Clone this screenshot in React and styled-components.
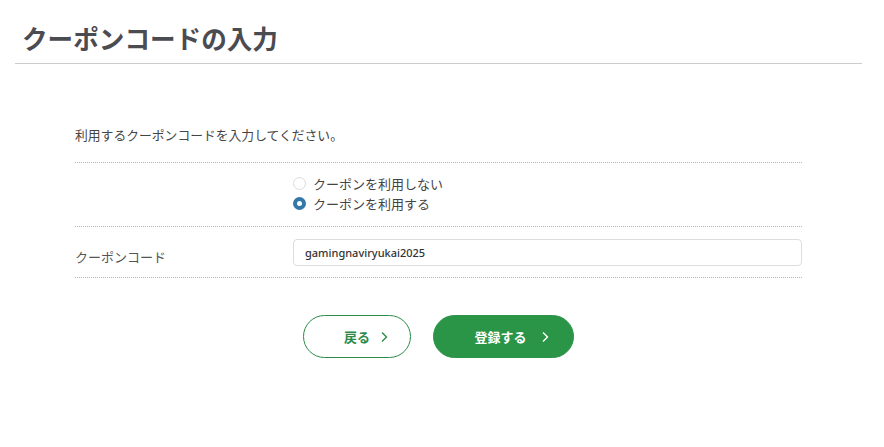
import React, { useState } from 'react';
import styled, { createGlobalStyle, css } from 'styled-components';

const GlobalStyle = createGlobalStyle`
  body {
    margin: 0;
    background: #fff;
    font-family: "Noto Sans CJK JP", "Noto Sans", sans-serif;
    color: #4d4d4d;
  }
`;

const Header = styled.header`
  margin: 0 22px 0 15px;
  padding: 21px 0 8px 7px;
  border-bottom: 1px solid #cccccc;
`;

const Title = styled.h1`
  margin: 0;
  font-size: 25.6px;
  line-height: 34px;
  font-weight: 700;
  color: #4b4b52;
`;

const Content = styled.main`
  margin: 0 0 0 75px;
  width: 727px;
  padding-top: 61px;
`;

const Intro = styled.p`
  margin: 0;
  font-size: 12.8px;
  line-height: 20px;
  color: #444;
  padding-bottom: 17px;
`;

const Table = styled.div`
  border-top: 1px dotted #b5b5b5;
`;

const Row = styled.div`
  display: grid;
  grid-template-columns: 218px 1fr;
  border-bottom: 1px dotted #b5b5b5;
  padding: ${(p) => p.$pad};
`;

const Label = styled.div`
  font-size: 13px;
  line-height: 20px;
  color: #555;
  padding-top: ${(p) => p.$top || 0}px;
`;

const RadioList = styled.div`
  display: flex;
  flex-direction: column;
`;

const RadioItem = styled.label`
  display: flex;
  align-items: center;
  gap: 7px;
  height: 20px;
  font-size: 13px;
  color: #444;
  cursor: pointer;
`;

const RadioDot = styled.span`
  box-sizing: border-box;
  width: 13px;
  height: 13px;
  border-radius: 50%;
  border: 1px solid #dcdcdc;
  background: #fff;
  ${(p) =>
    p.$checked &&
    css`
      border: 4px solid #3279a8;
      background: #fff;
    `}
`;

const HiddenInput = styled.input`
  display: none;
`;

const TextInput = styled.input`
  box-sizing: border-box;
  width: 100%;
  height: 27px;
  border: 1px solid #dddddd;
  border-radius: 4px;
  padding: 0 11px;
  font-family: "Noto Sans", sans-serif;
  font-size: 11px;
  font-weight: 500;
  color: #333;
  outline: none;
`;

const Buttons = styled.div`
  display: flex;
  justify-content: center;
  gap: 22px;
  padding: 37px 0 0 0;
`;

const Button = styled.button`
  position: relative;
  box-sizing: border-box;
  height: 43px;
  width: ${(p) => p.$width}px;
  border-radius: 22px;
  font-family: "Noto Sans CJK JP", sans-serif;
  font-size: 13px;
  font-weight: 700;
  cursor: pointer;
  padding: 0 ${(p) => p.$padRight}px 0 0;
  ${(p) =>
    p.$primary
      ? css`
          background: #2a9447;
          border: 1px solid #2a9447;
          color: #fff;
        `
      : css`
          background: #fff;
          border: 1px solid #2c8a4a;
          color: #2c8a4a;
        `}
`;

const Chevron = styled.svg`
  position: absolute;
  top: 50%;
  right: ${(p) => p.$right}px;
  transform: translateY(-50%);
`;

const Arrow = ({ right, color }) => (
  <Chevron $right={right} width="7" height="11" viewBox="0 0 7 11">
    <polyline points="1,1 5.5,5.5 1,10" fill="none" stroke={color} strokeWidth="1.4" />
  </Chevron>
);

export default function App() {
  const [useCoupon, setUseCoupon] = useState(true);
  const [code, setCode] = useState('gamingnaviryukai2025');

  return (
    <>
      <GlobalStyle />
      <Header>
        <Title>クーポンコードの入力</Title>
      </Header>
      <Content>
        <Intro>利用するクーポンコードを入力してください。</Intro>
        <Table>
          <Row $pad="10px 0 13px">
            <Label />
            <RadioList>
              <RadioItem>
                <HiddenInput type="radio" name="coupon" checked={!useCoupon} onChange={() => setUseCoupon(false)} />
                <RadioDot $checked={!useCoupon} />
                クーポンを利用しない
              </RadioItem>
              <RadioItem>
                <HiddenInput type="radio" name="coupon" checked={useCoupon} onChange={() => setUseCoupon(true)} />
                <RadioDot $checked={useCoupon} />
                クーポンを利用する
              </RadioItem>
            </RadioList>
          </Row>
          <Row $pad="11px 0 10px">
            <Label $top={9}>クーポンコード</Label>
            <div>
              <TextInput value={code} onChange={(e) => setCode(e.target.value)} />
            </div>
          </Row>
        </Table>
        <Buttons>
          <Button $width={108} $padRight={0}>
            戻る
            <Arrow right={22} color="#2c8a4a" />
          </Button>
          <Button $primary $width={141} $padRight={6}>
            登録する
            <Arrow right={24} color="#fff" />
          </Button>
        </Buttons>
      </Content>
    </>
  );
}
